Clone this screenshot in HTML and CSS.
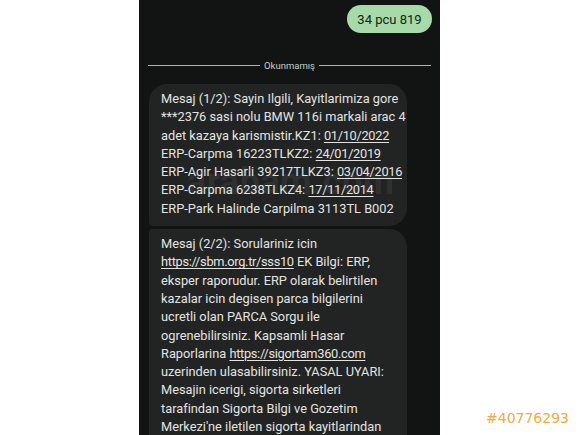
FILE: index.html
```html
<!DOCTYPE html>
<html lang="tr">
<head>
<meta charset="utf-8">
<title>Mesajlar</title>
<link rel="stylesheet" href="styles.css">
</head>
<body>
<div class="page">
  <div class="phone">
    <div class="sent-row">
      <div class="sent">34 pcu 819</div>
    </div>
    <div class="divider">
      <span class="line"></span>
      <span class="divider-text">Okunmamış</span>
      <span class="line"></span>
    </div>
    <div class="msg msg-first">
      Mesaj (1/2): Sayin Ilgili, Kayitlarimiza gore<br>
      ***2376 sasi nolu BMW 116i markali arac 4<br>
      adet kazaya karismistir.KZ1: <u>01/10/2022</u><br>
      ERP-Carpma 16223TLKZ2: <u>24/01/2019</u><br>
      ERP-Agir Hasarli 39217TLKZ3: <u>03/04/2016</u><br>
      ERP-Carpma 6238TLKZ4: <u>17/11/2014</u><br>
      ERP-Park Halinde Carpilma 3113TL B002
      <span class="watermark">arabam.com</span>
    </div>
    <div class="msg msg-second">
      Mesaj (2/2): Sorulariniz icin<br>
      <u>https://sbm.org.tr/sss10</u> EK Bilgi: ERP,<br>
      eksper raporudur. ERP olarak belirtilen<br>
      kazalar icin degisen parca bilgilerini<br>
      ucretli olan PARCA Sorgu ile<br>
      ogrenebilirsiniz. Kapsamli Hasar<br>
      Raporlarina <u>https://sigortam360.com</u><br>
      uzerinden ulasabilirsiniz. YASAL UYARI:<br>
      Mesajin icerigi, sigorta sirketleri<br>
      tarafindan Sigorta Bilgi ve Gozetim<br>
      Merkezi'ne iletilen sigorta kayitlarindan<br>
      olusturulmaktadir.
    </div>
  </div>
  <div class="ad-id">#40776293</div>
</div>
</body>
</html>
```
FILE: styles.css
```css
html, body {
  margin: 0;
  padding: 0;
  background: #ffffff;
}
.page {
  width: 580px;
  height: 435px;
  display: flex;
  overflow: hidden;
  position: relative;
}
.phone {
  width: 301px;
  height: 435px;
  margin-left: 139px;
  background: #121413;
  overflow: hidden;
  font-family: Roboto, "Noto Sans", sans-serif;
  display: flex;
  flex-direction: column;
}
.sent-row {
  display: flex;
  justify-content: flex-end;
  padding: 5px 8px 0 0;
}
.sent {
  height: 28px;
  width: 85px;
  box-sizing: border-box;
  display: flex;
  align-items: center;
  justify-content: center;
  background: #a6dba9;
  color: #102414;
  border-radius: 14px;
  font-size: 13px;
}
.divider {
  display: flex;
  align-items: center;
  gap: 4px;
  margin: 27px 9px 0 9px;
  height: 14px;
}
.line {
  flex: 1;
  height: 1px;
  background: #aab5ae;
}
.divider-text {
  font-size: 9.5px;
  color: #c4cec7;
}
.msg {
  position: relative;
  margin: 0 33px 0 10px;
  background: #222423;
  color: #e2e3e1;
  font-size: 12.8px;
  line-height: 18.3px;
  white-space: nowrap;
  padding: 6px 12px 8px 12px;
}
.msg u {
  text-underline-offset: 2px;
  letter-spacing: -0.3px;
}
.msg-first {
  margin-top: 13px;
  border-radius: 18px 18px 18px 4px;
}
.msg-second {
  margin-top: 3px;
  border-radius: 4px 18px 18px 18px;
}
.watermark {
  position: absolute;
  left: 38px;
  top: 80px;
  font-size: 36px;
  line-height: 36px;
  font-weight: bold;
  color: rgba(255, 255, 255, 0.07);
  letter-spacing: 0.5px;
}
.ad-id {
  position: absolute;
  left: 486px;
  top: 410px;
  font-family: "DejaVu Sans", sans-serif;
  font-size: 14px;
  color: #f2ab3c;
}
```
